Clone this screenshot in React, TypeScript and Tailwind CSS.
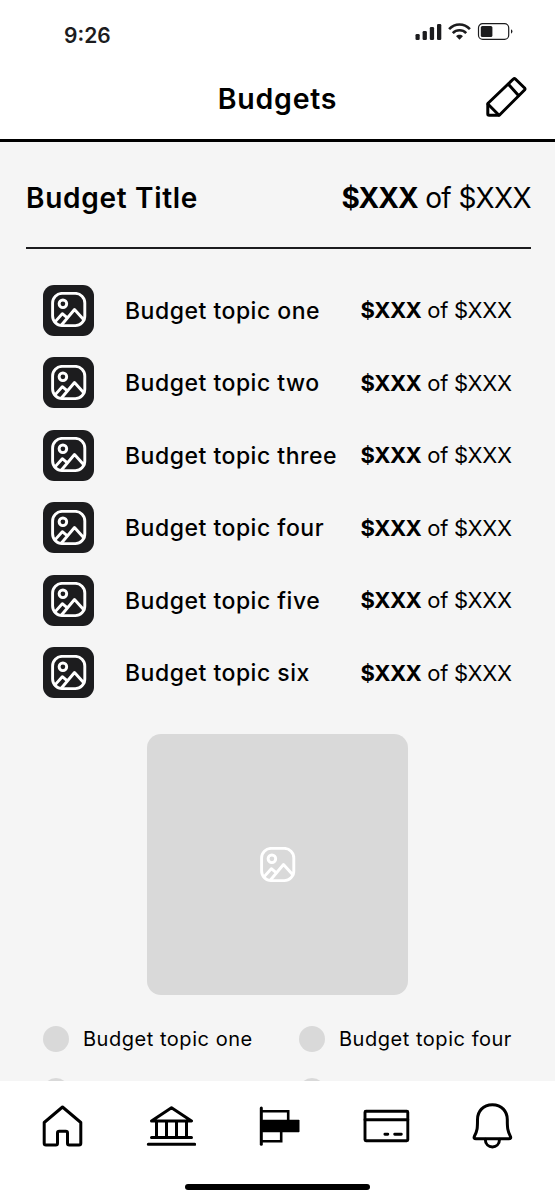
import React from "react";

const topics = ["one", "two", "three", "four", "five", "six"];

function PictureIcon() {
  return (
    <svg className="size-9" viewBox="0.5 0.5 36 36" fill="none" stroke="#fff" strokeWidth="2.9" strokeLinejoin="round" strokeLinecap="round">
      <rect x="2.1" y="1.9" width="32.2" height="32.2" rx="9.5" />
      <circle cx="12.4" cy="12.3" r="3.8" />
      <path d="M4.5 30.4L11.8 22.2L16.6 26.2M11 33.5L24 18L33.5 28.5" />
    </svg>
  );
}

function StatusIcons() {
  return (
    <svg className="h-5 w-[100px]" viewBox="0 0 100 20" fill="none">
      <g fill="#1c1c1e">
        <rect x="0.5" y="12" width="4.2" height="6" rx="1.3" />
        <rect x="7.6" y="9" width="4.3" height="9" rx="1.3" />
        <rect x="14.8" y="5" width="4.3" height="13" rx="1.3" />
        <rect x="22" y="2" width="4.3" height="16" rx="1.3" />
      </g>
      <g stroke="#1c1c1e" strokeWidth="2.6">
        <path d="M34.1 7.1C40 0.9 49 0.9 54.9 7.1" />
        <path d="M37.8 11.1C41.5 7.3 47.5 7.3 51.2 11.1" />
      </g>
      <path d="M41.1 14.2C42.9 12.4 46.1 12.4 47.9 14.2L44.5 17.7Z" fill="#1c1c1e" />
      <rect x="63.5" y="1.6" width="30.2" height="15.8" rx="4.2" stroke="#1c1c1e" strokeWidth="1.2" />
      <rect x="65.8" y="4" width="11.6" height="11" rx="1.5" fill="#1c1c1e" />
      <path d="M96 7.3Q99 9.5 96 11.7Z" fill="#1c1c1e" />
    </svg>
  );
}

function PencilIcon() {
  return (
    <svg className="size-[42px]" viewBox="0 0 42 42" fill="none" stroke="#000" strokeWidth="3" strokeLinejoin="round" strokeLinecap="round">
      <path d="M2.8 27.5L28.4 3Q29.4 2.1 30.4 3L39.6 12Q40.4 13 39.5 14L14.3 39.2H4.1Q2.8 39.2 2.8 38Z" />
      <path d="M23.4 8.2L33.5 19.5M3.1 28.2L13.8 39" />
    </svg>
  );
}

function Amount({ large = false }: { large?: boolean }) {
  return (
    <div className={large ? "text-[28px]" : "pt-px text-[22px]"}>
      <span className={large ? "font-bold tracking-[-0.9px]" : "font-bold tracking-[-0.5px]"}>$XXX</span>
      <span className={large ? "font-normal tracking-[-0.6px]" : "font-normal tracking-[-0.3px]"}> of $XXX</span>
    </div>
  );
}

function LegendItem({ name }: { name: string }) {
  return (
    <div className="flex h-[26px] items-center gap-[14px] whitespace-nowrap">
      <span className="size-[26px] shrink-0 rounded-full bg-[#d9d9d9]" />
      <span className="text-[20px] leading-[26px] tracking-[0.53px]">Budget topic {name}</span>
    </div>
  );
}

function Nav() {
  const stroke = { fill: "none", stroke: "#000", strokeWidth: 3, strokeLinejoin: "round", strokeLinecap: "round" } as const;
  return (
    <div className="flex justify-between px-[37px] pt-[20px]">
      <svg className="h-[50px] w-[51px]" viewBox="37 1101 51 50" {...stroke}>
        <path d="M62.5 1107L44.2 1122.5V1143.3Q44.2 1145 46 1145H55.8Q57.5 1145 57.5 1143.2V1133Q57.5 1131.3 59.3 1131.3H65.7Q67.5 1131.3 67.5 1133V1143.2Q67.5 1145 69.3 1145H79Q80.8 1145 80.8 1143.3V1122.5Z" />
      </svg>
      <svg className="h-[50px] w-[51px]" viewBox="144.5 1101 51 50" {...stroke}>
        <path d="M151 1121L171 1107.7L191 1121ZM151 1137.5H191M147.8 1144.3H194.2M156 1121V1137M166 1121V1137M176 1121V1137M186 1121V1137" />
      </svg>
      <svg className="h-[50px] w-[51px]" viewBox="252 1101 51 50" {...stroke}>
        <path strokeWidth="3" d="M261.3 1108V1144.3" />
        <path strokeWidth="2.6" strokeLinejoin="miter" d="M262 1111.2H288.2V1120.5M262 1141.2H281.2V1132" />
        <rect x="262" y="1119.7" width="37.5" height="12.6" rx="0.7" fill="#000" stroke="none" />
      </svg>
      <svg className="h-[50px] w-[51px]" viewBox="359.5 1101 51 50" {...stroke}>
        <rect x="364.5" y="1111.2" width="42.8" height="29.6" rx="1" strokeWidth="2.9" />
        <path strokeWidth="2.9" d="M364.5 1119.8H407.3M384.4 1134.2H387.3M394.2 1134.2H400.8" />
      </svg>
      <svg className="h-[50px] w-[51px]" viewBox="467 1101 51 50" {...stroke}>
        <path d="M492.4 1104.7C483 1104.7 477.5 1111.5 477.5 1119.5C477.5 1128 477.4 1130.5 474.4 1136.3Q473.3 1138.8 476 1138.8H508.8Q511.5 1138.8 510.4 1136.3C507.5 1130.5 507.3 1128 507.3 1119.5C507.3 1111.5 501.8 1104.7 492.4 1104.7Z" />
        <path d="M485.3 1139.2C485.3 1149.5 499.5 1149.5 499.5 1139.2" />
      </svg>
    </div>
  );
}

export default function App() {
  return (
    <main className="flex h-[1200px] w-[555px] flex-col overflow-hidden bg-[#f5f5f5] font-['Inter',sans-serif] text-black">
      <header className="flex h-[142px] shrink-0 flex-col border-b-[3px] border-black bg-white">
        <div className="flex h-[60px] items-start justify-between pl-[64px] pr-[40px]">
          <span className="pt-[21px] text-[21px] leading-[30px] font-semibold text-[#1c1c1e]">9:26</span>
          <div className="pt-[22px]"><StatusIcons /></div>
        </div>
        <div className="grid grid-cols-[1fr_auto_1fr] items-center px-[28px] pt-[16px]">
          <span />
          <h1 className="pt-[2px] text-[28.5px] leading-[42px] font-semibold tracking-[0.75px]">Budgets</h1>
          <div className="flex justify-end pb-[2px]"><PencilIcon /></div>
        </div>
      </header>

      <section className="flex min-h-0 flex-1 flex-col overflow-hidden">
        <div className="mr-[24px] ml-[26px] flex h-[107px] shrink-0 items-center justify-between border-b-2 border-[#1c1c1e] pt-[6px]">
          <h2 className="text-[28px] font-semibold tracking-[0.7px]">Budget Title</h2>
          <Amount large />
        </div>
        <div className="flex shrink-0 flex-col gap-[21.5px] pt-[35.5px] pr-[43px] pl-[43px]">
          {topics.map((name) => (
            <div key={name} className="flex h-[51px] items-center whitespace-nowrap">
              <div className="flex size-[51px] shrink-0 items-center justify-center rounded-[11px] bg-[#1c1c1e]">
                <PictureIcon />
              </div>
              <span className="ml-[31px] w-[235.5px] shrink-0 pt-[2px] text-[23px] font-medium tracking-[0.5px]">Budget topic {name}</span>
              <Amount />
            </div>
          ))}
        </div>
        <div className="mx-auto mt-[36px] flex size-[261px] shrink-0 items-center justify-center rounded-[14px] bg-[#d9d9d9]">
          <PictureIcon />
        </div>
        <div className="grid grid-cols-[256px_1fr] gap-y-[26px] pt-[31px] pl-[43px]">
          <LegendItem name="one" />
          <LegendItem name="four" />
          <span className="size-[26px] rounded-full bg-[#d9d9d9]" />
          <span className="size-[26px] rounded-full bg-[#d9d9d9]" />
        </div>
      </section>

      <footer className="flex h-[119px] shrink-0 flex-col justify-between bg-white pb-[10px]">
        <Nav />
        <div className="mx-auto h-[6px] w-[185px] rounded-full bg-black" />
      </footer>
    </main>
  );
}
